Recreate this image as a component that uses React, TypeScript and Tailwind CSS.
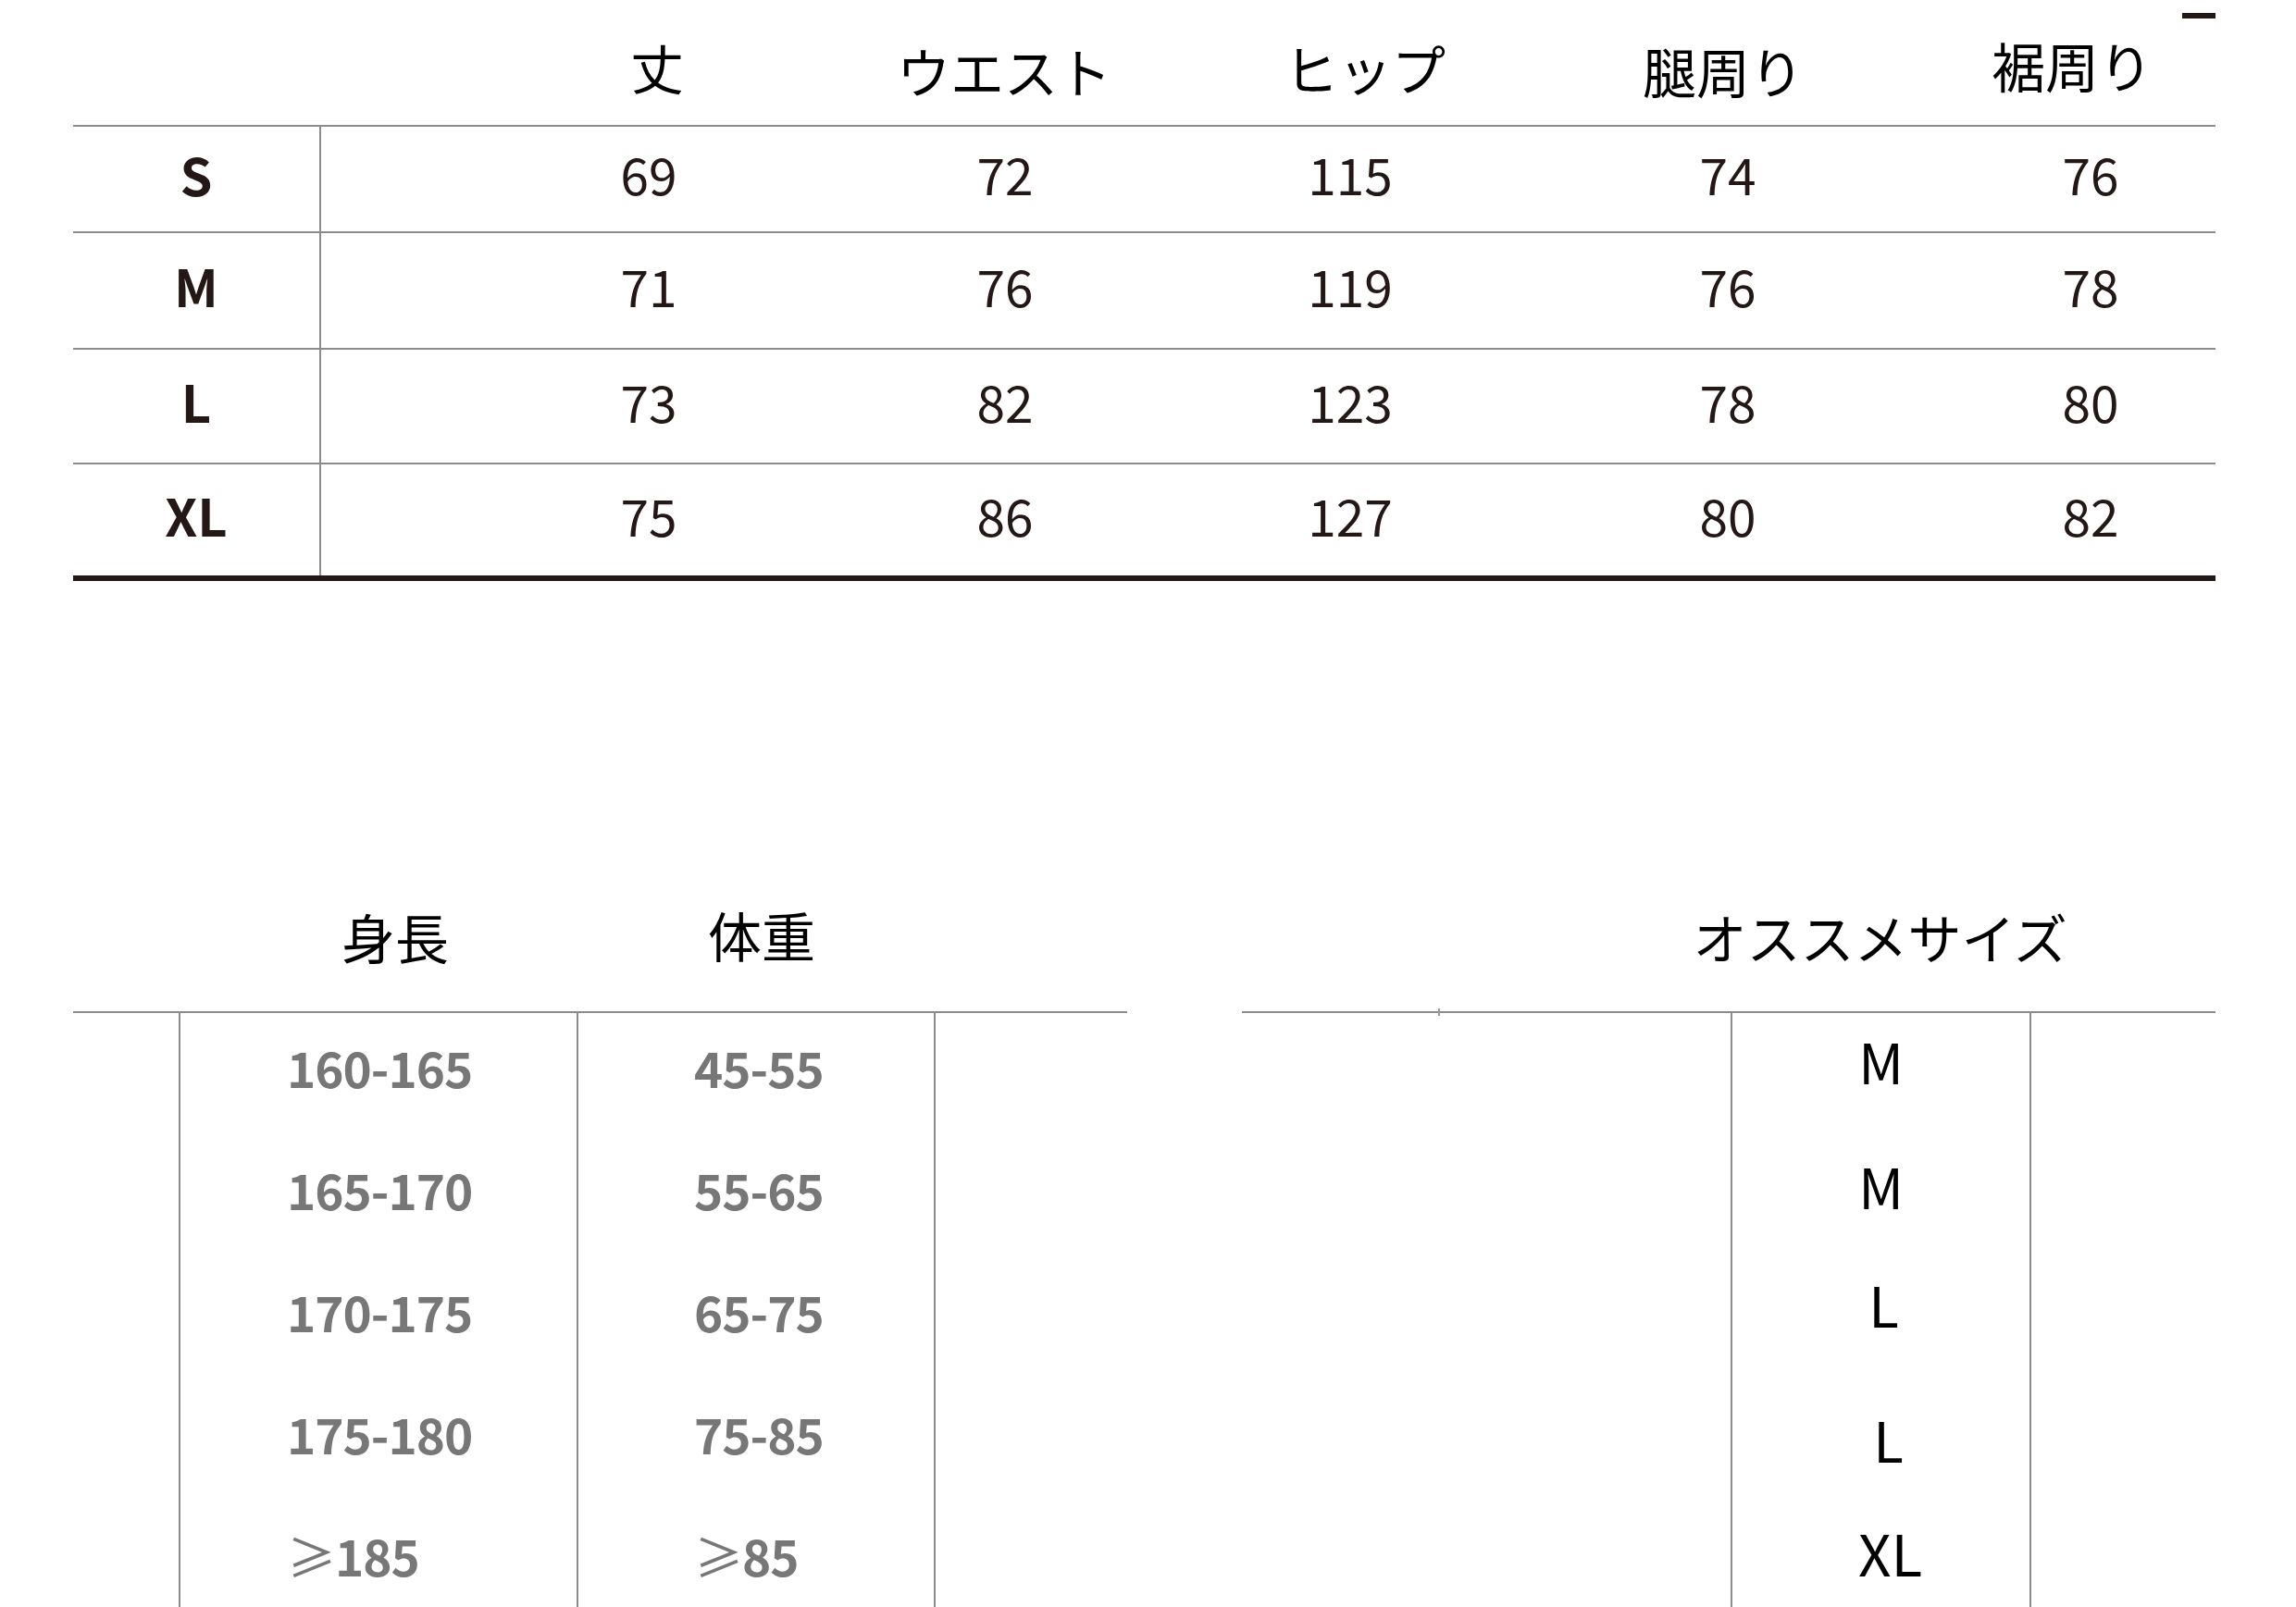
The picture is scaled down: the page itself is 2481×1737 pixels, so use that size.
const FONT = "font-['Noto_Sans_CJK_JP','Noto_Sans',sans-serif]";
const LINE = "border-[#8c8c8c]";

const heads = ["丈", "ウエスト", "ヒップ", "腿周り", "裾周り"];
const headGaps = ["ml-[228px]", "ml-[105px]", "ml-[120px]", "ml-[117px]", "ml-[107px]"];
const headPads = ["pt-[8px]", "pt-[16px]", "pt-[10px]", "pt-[16px]", "pt-[4px]"];
const cellGaps = ["ml-[219px]", "ml-[115px]", "ml-[103px]", "ml-[138px]", "ml-[122px]"];

const rows = [
  { size: "S", vals: [69, 72, 115, 74, 76], h: "h-[115px]" },
  { size: "M", vals: [71, 76, 119, 76, 78], h: "h-[126px]" },
  { size: "L", vals: [73, 82, 123, 78, 80], h: "h-[124px]" },
  { size: "XL", vals: [75, 86, 127, 80, 82], h: "h-[122px]" },
];

const guide = [
  { height: "160-165", weight: "45-55" },
  { height: "165-170", weight: "55-65" },
  { height: "170-175", weight: "65-75" },
  { height: "175-180", weight: "75-85" },
  { height: "≥185", weight: "≥85" },
];

const picks = [
  { label: "M", cls: "mt-[21px]" },
  { label: "M", cls: "mt-[75px]" },
  { label: "L", cls: "mt-[68px] pl-[6px]" },
  { label: "L", cls: "mt-[86px] pl-[16px]" },
  { label: "XL", cls: "mt-[61px] pl-[20px] text-[62px]" },
];

function Range({ text }: { text: string }) {
  // the ≥ sign is drawn in the slanted Chinese style
  if (text.startsWith("≥")) {
    return (
      <span>
        <span className="font-['Noto_Sans_CJK_SC',sans-serif] font-normal">≥</span>
        {text.slice(1)}
      </span>
    );
  }
  return <span>{text}</span>;
}

export default function App() {
  return (
    <div className={`relative w-[2481px] h-[1737px] overflow-hidden bg-white ${FONT}`}>
      <span className="absolute left-[2358px] top-[14px] w-[36px] h-[6px] bg-[#231815]" />

      {/* size table */}
      <div className="ml-[79px] w-[2315px]">
        <div className="flex h-[135px]">
          <div className="w-[268px] shrink-0" />
          {heads.map((h, i) => (
            <div
              key={h}
              className={`${headGaps[i]} ${headPads[i]} w-[270px] shrink-0 flex items-center justify-center whitespace-nowrap text-[58px] leading-none text-black`}
            >
              {h}
            </div>
          ))}
        </div>
        {rows.map((r) => (
          <div key={r.size} className={`flex ${r.h} border-t-2 ${LINE}`}>
            <div className={`w-[268px] shrink-0 border-r-2 ${LINE} flex items-center justify-center pb-[12px] text-[56px] font-bold leading-none text-[#231815]`}>
              {r.size}
            </div>
            {r.vals.map((v, i) => (
              <div
                key={i}
                className={`${cellGaps[i]} w-[270px] shrink-0 flex items-center justify-center pb-[12px] text-[55px] leading-none text-[#231815]`}
              >
                {v}
              </div>
            ))}
          </div>
        ))}
        <div className="h-[6px] bg-[#231815]" />
      </div>

      {/* recommended size */}
      <div className="mt-[302px] ml-[79px] flex">
        <div className="w-[1139px] shrink-0">
          <div className={`flex h-[165px] border-b-2 ${LINE} text-[58px] leading-none text-black`}>
            <div className="w-[114px] shrink-0" />
            <div className="w-[430px] shrink-0 flex items-center justify-center pl-[38px]">身長</div>
            <div className="w-[386px] shrink-0 flex items-center justify-center pl-[14px] pb-[4px]">体重</div>
          </div>
          <div className="flex h-[642px] text-[53px] font-bold leading-none tracking-[-1px] text-[#777777]">
            <div className="w-[114px] shrink-0" />
            <div className={`w-[430px] shrink-0 border-l-2 ${LINE} pl-[115px]`}>
              {guide.map((g) => (
                <div key={g.height} className="h-[132px] pb-[16px] flex items-center">
                  <Range text={g.height} />
                </div>
              ))}
            </div>
            <div className={`w-[386px] shrink-0 border-l-2 ${LINE} pl-[125px]`}>
              {guide.map((g) => (
                <div key={g.weight} className="h-[132px] pb-[16px] flex items-center">
                  <Range text={g.weight} />
                </div>
              ))}
            </div>
            <div className={`w-[209px] shrink-0 border-l-2 ${LINE}`} />
          </div>
        </div>

        <div className="ml-[124px] w-[1052px] shrink-0">
          <div className={`relative flex h-[165px] border-b-2 ${LINE} text-[58px] leading-none text-black`}>
            <span className="absolute left-[212px] bottom-[-5px] w-[2px] h-[8px] bg-[#9a9a9a]" />
            <div className="w-[528px] shrink-0" />
            <div className="w-[323px] shrink-0 flex items-center justify-center whitespace-nowrap">オススメサイズ</div>
          </div>
          <div className="flex h-[642px] text-[60px] leading-none text-black">
            <div className="w-[528px] shrink-0" />
            <div className={`w-[323px] shrink-0 border-l-2 ${LINE} flex flex-col items-center`}>
              {picks.map((p, i) => (
                <div key={i} className={`${p.cls} h-[60px]`}>
                  {p.label}
                </div>
              ))}
            </div>
            <div className={`w-[201px] shrink-0 border-l-2 ${LINE}`} />
          </div>
        </div>
      </div>
    </div>
  );
}
